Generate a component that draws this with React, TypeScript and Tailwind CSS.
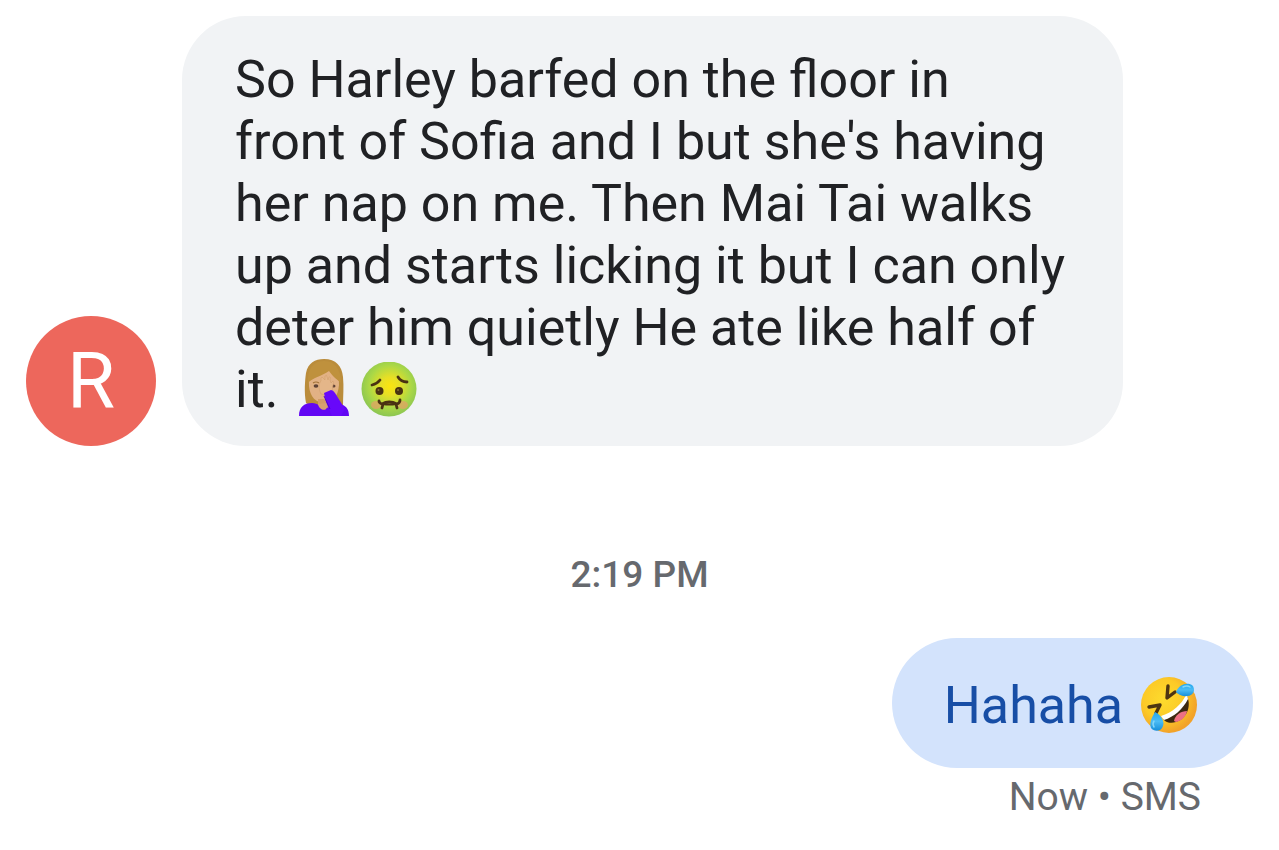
import type { ReactNode } from 'react';

function FacepalmEmoji() {
  return (
    <svg viewBox="14 10 50 62" role="img" aria-label="woman facepalming" className="h-[62px] w-[50px]">
      <path d="M21 54 C19 43 20 31 21 24 C23 14 30 10 39 10 C51 10 57 17 58 28 C59 38 58 47 58 56 L49 57 L26 57Z" fill="#ba8c3b" />
      <path d="M24 37 C23 24 28 15 39 14 C50 14 54 23 54 36 C53 48 47 54 40 54 C31 54 25 48 24 37Z" fill="#e2b184" />
      <path d="M23 34 C22 19 29 12 39 12 C49 12 56 19 56 34 C53 31 48 28 44 22 C37 27 27 29 23 34Z" fill="#bf913d" />
      <path d="M33 50 H44 V61 H33Z" fill="#d39c68" />
      <path d="M14 67 C14 58 19 54 27 54 C33 54 36 59 41 59 C45 59 48 54 54 55 C61 56 64 60 64 67Z" fill="#6206f3" />
      <path d="M28 34 Q31 32 34 34" fill="none" stroke="#a37238" strokeWidth="1.2" />
      <ellipse cx="31" cy="37" rx="2.4" ry="1.8" fill="#5f4236" />
      <ellipse cx="48.5" cy="37" rx="2" ry="1.6" fill="#5f4236" />
      <path d="M36 45 C33 39 34 34 36 32 L36 29 Q37 27 38 29 L40 31 L40 27 Q42 25 42 28 L43 31 L44 28 Q46 27 45 31 L46 34 L48 32 Q49 33 48 36 L47 42 L41 46Z" fill="#e4b689" stroke="#cf9c6b" strokeWidth=".5" />
      <path d="M39 44 L46 41 Q48 41 50 44 L60 60 L56 67 H47 L41 53Z" fill="#6808fa" />
      <path d="M39 47 L45 60" stroke="#4e05cc" strokeWidth="1" />
      <path d="M33 55 C34 61 41 63 42 58 L41 54Z" fill="#d7a170" />
    </svg>
  );
}

function NauseatedEmoji() {
  return (
    <svg viewBox="0 0 56 56" role="img" aria-label="nauseated face" className="size-14">
      <defs>
        <radialGradient id="sickSkin" cx=".52" cy=".45" r=".55">
          <stop offset="0" stopColor="#fbe40f" />
          <stop offset=".3" stopColor="#e8df25" />
          <stop offset=".7" stopColor="#abd846" />
          <stop offset="1" stopColor="#8cc653" />
        </radialGradient>
      </defs>
      <circle cx="28" cy="27" r="27.5" fill="url(#sickSkin)" />
      <ellipse cx="15" cy="43" rx="5" ry="4" fill="#e2a364" opacity=".75" />
      <ellipse cx="42" cy="43" rx="5" ry="4" fill="#e2a364" opacity=".75" />
      <circle cx="18.5" cy="29" r="4" fill="#493212" />
      <circle cx="38" cy="29" r="4" fill="#493212" />
      <circle cx="17.5" cy="28" r="1" fill="#877332" />
      <circle cx="37" cy="28" r="1" fill="#877332" />
      <g fill="none" stroke="#493212" strokeLinecap="round" strokeLinejoin="round">
        <path d="M11 23 Q16 22 19 18 M37 15 Q40 20 46 20" strokeWidth="2.8" />
        <path d="M18 39 Q18 41 21 42 Q28 38 36 42 Q39 41 39 38 M22 42 L21 46 M35 42 L36 46" strokeWidth="2.8" />
        <path d="M22 42 Q28 43 35 42" strokeWidth="2" />
      </g>
    </svg>
  );
}

function RoflEmoji() {
  return (
    <svg viewBox="0 0 56 56" role="img" aria-label="rolling on the floor laughing" className="size-14">
      <defs>
        <radialGradient id="roflSkin" cx=".4" cy=".4" r=".6">
          <stop offset="0" stopColor="#fddb2d" />
          <stop offset=".6" stopColor="#fcca27" />
          <stop offset="1" stopColor="#f2a229" />
        </radialGradient>
        <linearGradient id="tear" x1="0" y1="0" x2="0" y2="1">
          <stop offset="0" stopColor="#25a7ed" />
          <stop offset=".5" stopColor="#4bbcf5" />
          <stop offset="1" stopColor="#178fda" />
        </linearGradient>
      </defs>
      <circle cx="28" cy="28" r="28" fill="url(#roflSkin)" />
      <path d="M22 41 C33 37 42 29 46 19 C51 30 45 42 35 45 C29 47 23 45 22 41Z" fill="#3d2810" />
      <path d="M33 44 C34 38 40 34 46 34 C45 40 40 44 35 45Z" fill="#ee7083" />
      <path d="M20 39 C31 36 41 27 45 18 Q47 19 47 22 C42 32 33 40 23 43Z" fill="#fff" />
      <path d="M8 30 L19 28 L15 36 M27 9 L26 21 L34 15" fill="none" stroke="#4d3512" strokeWidth="3.4" strokeLinecap="round" strokeLinejoin="round" />
      <path d="M35 15 C38 7 46 5 51 8 C55 12 53 19 46 19 C41 20 37 17 35 15Z" fill="url(#tear)" />
      <path d="M14 35 C20 38 24 44 22 49 C20 55 13 55 10 51 C8 46 11 40 14 35Z" fill="url(#tear)" />
      <path d="M42 10 Q46 8 49 10 M13 44 Q11 47 13 50" fill="none" stroke="#82d6fa" strokeWidth="1.5" strokeLinecap="round" />
    </svg>
  );
}

function Avatar({ children }: { children: ReactNode }) {
  return (
    <div className="flex size-[130px] shrink-0 items-center justify-center rounded-full bg-[#ed675c] text-[78px] leading-none text-white">
      {children}
    </div>
  );
}

export default function App() {
  return (
    <main className="bg-white px-[26px] pt-4 pb-8 font-['Roboto',sans-serif]">
      <article className="flex items-end gap-[26px]">
        <Avatar>R</Avatar>
        <div className="max-w-[941px] rounded-[64px] bg-[#f1f3f5] pt-[33px] pr-[52px] pb-[25px] pl-[53px]">
          <p className="text-[52px] leading-[62px] text-[#202124]">
            So Harley barfed on the floor in front of Sofia and I but she's having her nap on me. Then Mai Tai
            walks up and starts licking it but I can only deter him quietly He ate like half of it.{' '}
            <span className="ml-2 inline-flex h-[62px] items-center gap-3 align-top">
              <FacepalmEmoji />
              <NauseatedEmoji />
            </span>
          </p>
        </div>
      </article>

      <time className="mt-[104px] block text-center text-[37px] leading-[50px] font-medium text-[#66696e]">
        2:19 PM
      </time>

      <article className="mt-[38px] flex flex-col items-end">
        <div className="flex h-[130px] items-center gap-[18px] rounded-full bg-[#d3e3fc] pt-1 pr-14 pl-[52px]">
          <p className="pt-0.5 text-[52px] leading-[62px] text-[#174ea6]">Hahaha</p>
          <RoflEmoji />
        </div>
        <p className="mt-1 mr-[52px] text-[39px] leading-[50px] text-[#66696e]">Now • SMS</p>
      </article>
    </main>
  );
}
